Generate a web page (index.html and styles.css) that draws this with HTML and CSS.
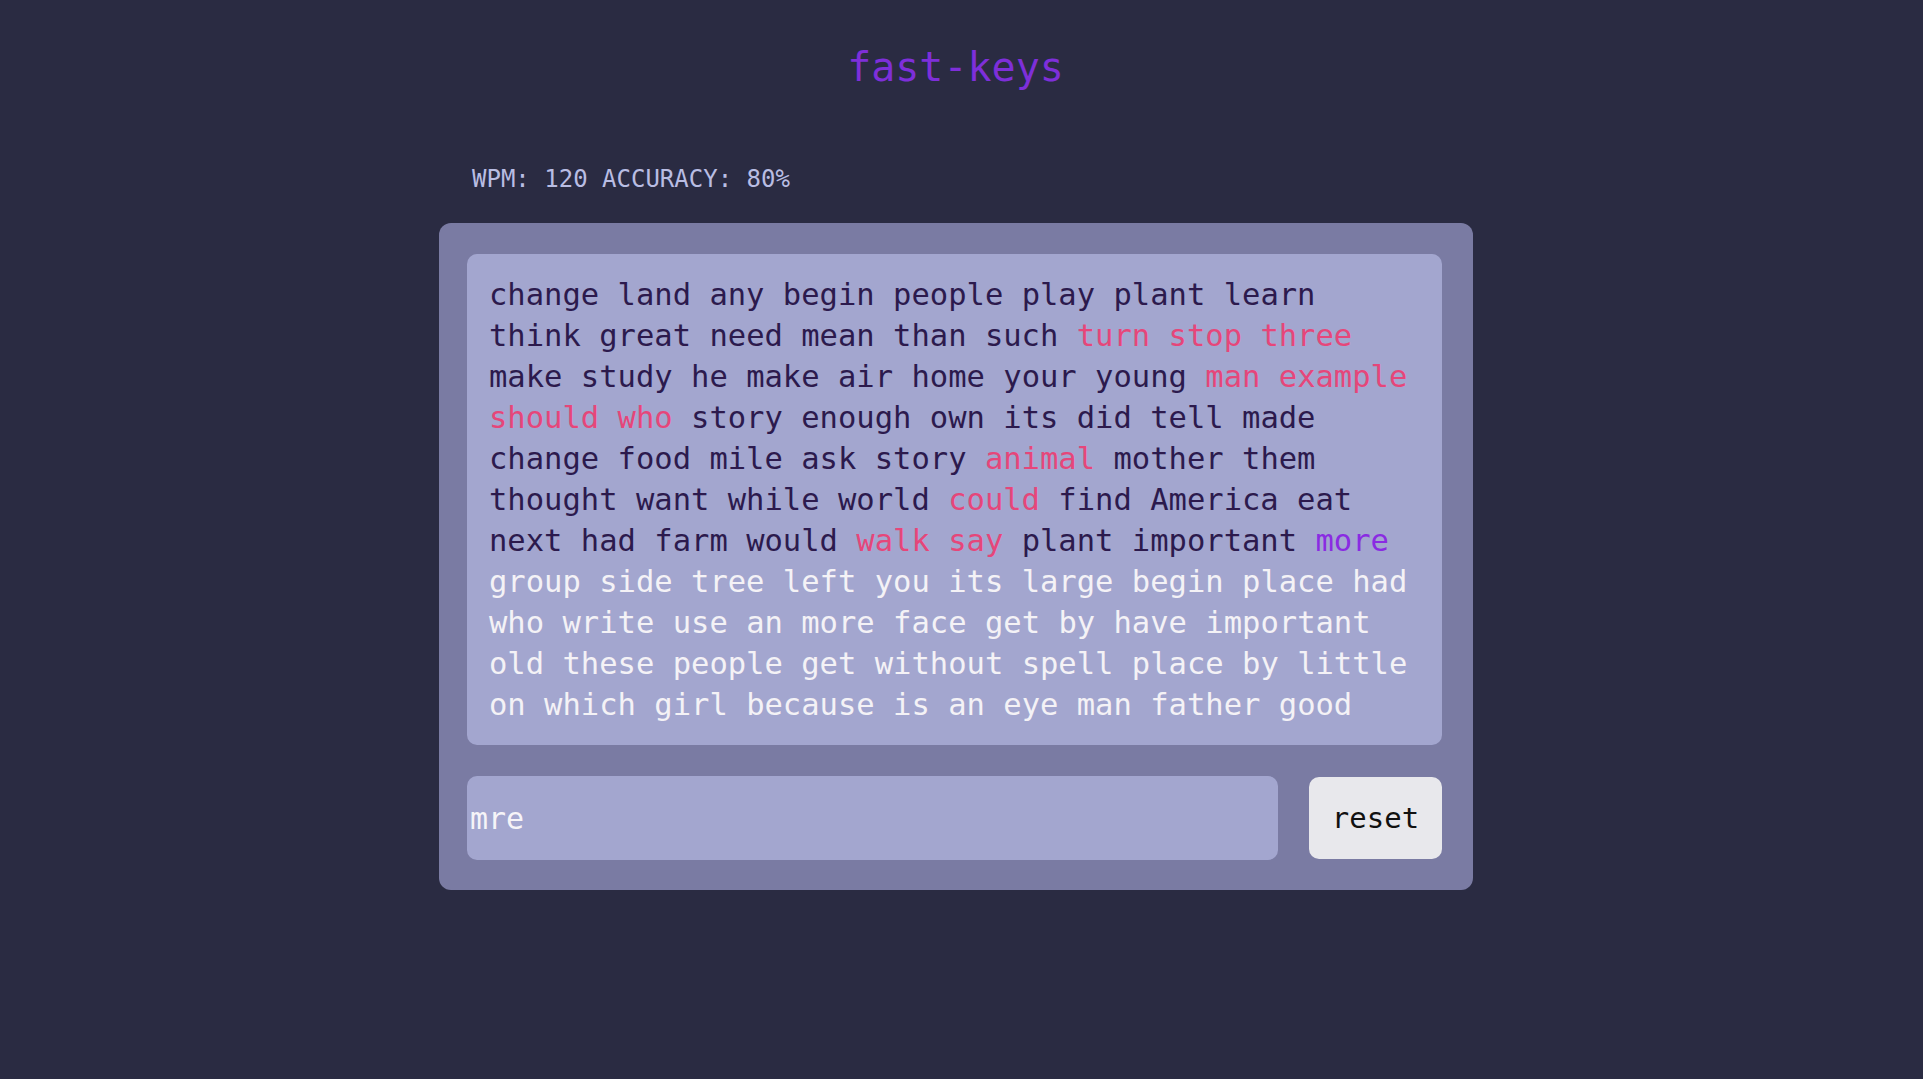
FILE: index.html
```html
<!DOCTYPE html>
<html lang="en">
<head>
<meta charset="utf-8">
<title>fast-keys</title>
<link rel="stylesheet" href="styles.css">
</head>
<body>
<main class="app">
  <h1 class="title">fast-keys</h1>
  <section class="game">
    <div class="stats">WPM: 120 ACCURACY: 80%</div>
    <div class="panel">
      <div class="words"><span class="w done">change</span> <span class="w done">land</span> <span class="w done">any</span> <span class="w done">begin</span> <span class="w done">people</span> <span class="w done">play</span> <span class="w done">plant</span> <span class="w done">learn</span> <span class="w done">think</span> <span class="w done">great</span> <span class="w done">need</span> <span class="w done">mean</span> <span class="w done">than</span> <span class="w done">such</span> <span class="w wrong">turn</span> <span class="w wrong">stop</span> <span class="w wrong">three</span> <span class="w done">make</span> <span class="w done">study</span> <span class="w done">he</span> <span class="w done">make</span> <span class="w done">air</span> <span class="w done">home</span> <span class="w done">your</span> <span class="w done">young</span> <span class="w wrong">man</span> <span class="w wrong">example</span> <span class="w wrong">should</span> <span class="w wrong">who</span> <span class="w done">story</span> <span class="w done">enough</span> <span class="w done">own</span> <span class="w done">its</span> <span class="w done">did</span> <span class="w done">tell</span> <span class="w done">made</span> <span class="w done">change</span> <span class="w done">food</span> <span class="w done">mile</span> <span class="w done">ask</span> <span class="w done">story</span> <span class="w wrong">animal</span> <span class="w done">mother</span> <span class="w done">them</span> <span class="w done">thought</span> <span class="w done">want</span> <span class="w done">while</span> <span class="w done">world</span> <span class="w wrong">could</span> <span class="w done">find</span> <span class="w done">America</span> <span class="w done">eat</span> <span class="w done">next</span> <span class="w done">had</span> <span class="w done">farm</span> <span class="w done">would</span> <span class="w wrong">walk</span> <span class="w wrong">say</span> <span class="w done">plant</span> <span class="w done">important</span> <span class="w current">more</span> <span class="w">group</span> <span class="w">side</span> <span class="w">tree</span> <span class="w">left</span> <span class="w">you</span> <span class="w">its</span> <span class="w">large</span> <span class="w">begin</span> <span class="w">place</span> <span class="w">had</span> <span class="w">who</span> <span class="w">write</span> <span class="w">use</span> <span class="w">an</span> <span class="w">more</span> <span class="w">face</span> <span class="w">get</span> <span class="w">by</span> <span class="w">have</span> <span class="w">important</span> <span class="w">old</span> <span class="w">these</span> <span class="w">people</span> <span class="w">get</span> <span class="w">without</span> <span class="w">spell</span> <span class="w">place</span> <span class="w">by</span> <span class="w">little</span> <span class="w">on</span> <span class="w">which</span> <span class="w">girl</span> <span class="w">because</span> <span class="w">is</span> <span class="w">an</span> <span class="w">eye</span> <span class="w">man</span> <span class="w">father</span> <span class="w">good</span></div>
      <div class="controls">
        <input class="typing" type="text" value="mre" aria-label="type here">
        <button class="reset" type="button">reset</button>
      </div>
    </div>
  </section>
</main>
</body>
</html>
```

FILE: styles.css
```css
* {
  box-sizing: border-box;
}

html, body {
  margin: 0;
  padding: 0;
}

body {
  background: #2a2b42;
  font-family: "DejaVu Sans Mono", "Liberation Mono", monospace;
  min-height: 100vh;
}

.app {
  display: flex;
  flex-direction: column;
  align-items: center;
}

.title {
  margin: 40px 0 0 -12px;
  height: 54px;
  font-size: 40px;
  line-height: 54px;
  font-weight: normal;
  color: #7e2fd9;
  letter-spacing: 0;
}

.game {
  width: 1034px;
  margin-left: -11px;
  display: flex;
  flex-direction: column;
}

.stats {
  margin: 69px 0 28px 33px;
  height: 32px;
  line-height: 32px;
  font-size: 24px;
  color: #b9bde3;
}

.panel {
  background: #7a7ba3;
  border-radius: 12px;
  padding: 31px 31px 30px 28px;
  display: flex;
  flex-direction: column;
  gap: 31px;
}

.words {
  background: #a3a6cf;
  border-radius: 10px;
  padding: 20px 26px 20px 22px;
  font-size: 30.5px;
  line-height: 41px;
  color: #f4f2f6;
}

.w.done {
  color: #2c1a4d;
}

.w.wrong {
  color: #e6467a;
}

.w.current {
  color: #8a2be2;
}

.controls {
  display: flex;
  gap: 31px;
  height: 84px;
}

.typing {
  flex: 1;
  min-width: 0;
  height: 84px;
  border: none;
  outline: none;
  border-radius: 10px;
  background: #a3a6cf;
  padding: 0 3px;
  font-family: "DejaVu Sans Mono", "Liberation Mono", monospace;
  font-size: 30px;
  color: #f6f4f8;
}

.reset {
  width: 133px;
  height: 82px;
  align-self: center;
  border: none;
  border-radius: 10px;
  background: #e8e8ec;
  color: #111;
  font-family: "DejaVu Sans Mono", "Liberation Mono", monospace;
  font-size: 29px;
  cursor: pointer;
}
```
